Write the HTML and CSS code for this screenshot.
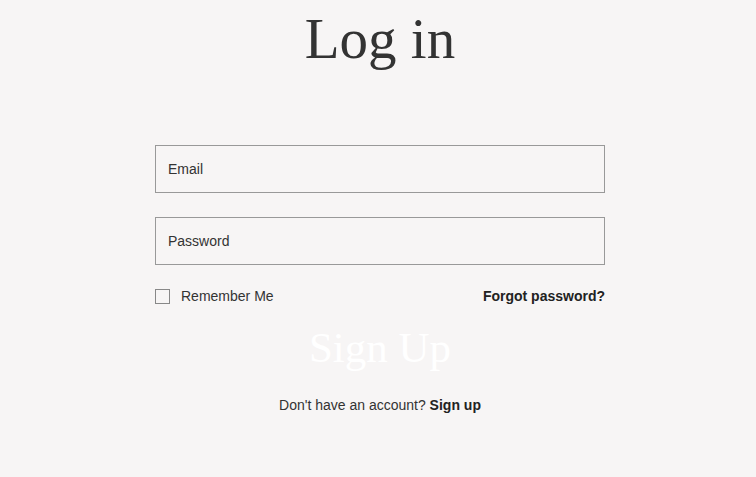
FILE: index.html
```html
<!DOCTYPE html>
<html>
<head>
<meta charset="utf-8">
<link rel="stylesheet" href="styles.css">
</head>
<body>
<main class="page">
  <h1 class="title">Log in</h1>
  <form class="form">
    <input class="field" type="email" placeholder="Email">
    <input class="field" type="password" placeholder="Password">
    <div class="row">
      <label class="remember"><span class="box"></span>Remember Me</label>
      <a class="forgot" href="#">Forgot password?</a>
    </div>
    <button class="submit" type="button">Sign Up</button>
    <p class="signup">Don't have an account? <a href="#">Sign up</a></p>
  </form>
</main>
</body>
</html>
```
FILE: styles.css
```css
html, body {
  margin: 0;
  padding: 0;
  background: #f7f5f5;
}
.page {
  display: flex;
  flex-direction: column;
  align-items: center;
  padding-left: 4px;
  font-family: "Liberation Sans", Arial, sans-serif;
  color: #333;
}
.title {
  margin: 4px 0 0;
  font-family: "Liberation Serif", "Times New Roman", serif;
  font-weight: normal;
  font-size: 57px;
  line-height: 70px;
  color: #333;
}
.form {
  width: 450px;
  margin-top: 71px;
  display: flex;
  flex-direction: column;
}
.field {
  box-sizing: border-box;
  height: 48px;
  margin: 0 0 24px;
  padding: 0 12px;
  border: 1px solid #999;
  background: transparent;
  font-family: "Liberation Sans", Arial, sans-serif;
  font-size: 14px;
  color: #333;
  outline: none;
}
.field::placeholder {
  color: #333;
}
.row {
  display: flex;
  justify-content: space-between;
  align-items: center;
  height: 16px;
  margin-top: -1px;
  font-size: 14px;
}
.remember {
  display: flex;
  align-items: center;
  color: #333;
}
.box {
  box-sizing: border-box;
  width: 15px;
  height: 15px;
  border: 1px solid #888;
  margin-right: 11px;
}
.forgot {
  font-size: 14px;
  font-weight: bold;
  color: #222;
  text-decoration: none;
}
.submit {
  margin: 18px 0 0;
  padding: 0;
  border: 0;
  background: transparent;
  font-family: "Liberation Serif", "Times New Roman", serif;
  font-size: 43px;
  line-height: 52px;
  color: #fff;
  cursor: pointer;
}
.signup {
  margin: 23px 0 0;
  text-align: center;
  font-size: 14px;
  color: #333;
}
.signup a {
  font-size: 14px;
  font-weight: bold;
  color: #222;
  text-decoration: none;
}
```
